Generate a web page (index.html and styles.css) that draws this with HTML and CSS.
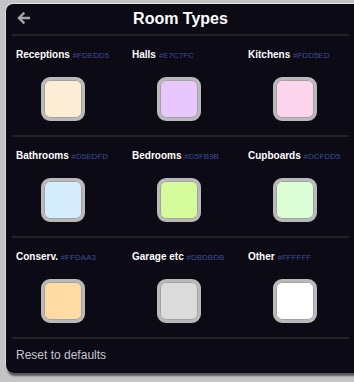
FILE: index.html
```html
<!DOCTYPE html>
<html>
<head>
    <title>Room Types</title>
    <link rel="stylesheet" href="styles.css">
</head>
<body>
    <div class="panel">
        <div class="header">
            <span class="back">
                <svg width="13" height="12" viewBox="0 0 13 12">
                    <path d="M12 6H2.5M6.5 1.5L2 6l4.5 4.5" fill="none" stroke="#a6a6a6" stroke-width="2.4" stroke-linecap="square"/>
                </svg>
            </span>
            <h1 class="title">Room Types</h1>
            <span></span>
        </div>

        <div class="row">
            <div class="room">
                <div class="label">Receptions <span class="hex">#FDEDD5</span></div>
                <div class="swatch c-receptions"></div>
            </div>
            <div class="room">
                <div class="label">Halls <span class="hex">#E7C7FC</span></div>
                <div class="swatch c-halls"></div>
            </div>
            <div class="room">
                <div class="label">Kitchens <span class="hex">#FDD5ED</span></div>
                <div class="swatch c-kitchens"></div>
            </div>
        </div>

        <div class="row">
            <div class="room">
                <div class="label">Bathrooms <span class="hex">#D5EDFD</span></div>
                <div class="swatch c-bathrooms"></div>
            </div>
            <div class="room">
                <div class="label">Bedrooms <span class="hex">#D5FB9B</span></div>
                <div class="swatch c-bedrooms"></div>
            </div>
            <div class="room">
                <div class="label">Cupboards <span class="hex">#DCFDD5</span></div>
                <div class="swatch c-cupboards"></div>
            </div>
        </div>

        <div class="row">
            <div class="room">
                <div class="label">Conserv. <span class="hex">#FFDAA3</span></div>
                <div class="swatch c-conserv"></div>
            </div>
            <div class="room">
                <div class="label">Garage etc <span class="hex">#DBDBDB</span></div>
                <div class="swatch c-garage"></div>
            </div>
            <div class="room">
                <div class="label">Other <span class="hex">#FFFFFF</span></div>
                <div class="swatch c-other"></div>
            </div>
        </div>

        <div class="footer">Reset to defaults</div>
    </div>
</body>
</html>
```

FILE: styles.css
```css
html, body {
    margin: 0;
    height: 100%;
    overflow: hidden;
}

body {
    background: #c4c4c4;
    font-family: "Liberation Sans", Arial, sans-serif;
    padding: 3px 0 0 5px;
    box-sizing: border-box;
}

.panel {
    width: 350px;
    height: 370px;
    box-sizing: border-box;
    background: #0b0a15;
    border-top: 1px solid #e4e4e4;
    border-left: 1px solid #d6d6d6;
    border-radius: 8px 0 0 8px;
    box-shadow: 2px 3px 2px rgba(0,0,0,0.55);
}

.header {
    display: grid;
    grid-template-columns: 1fr auto 1fr;
    align-items: center;
    height: 30px;
    margin: 0 6px;
    border-bottom: 2px solid #222128;
}

.back {
    display: flex;
    padding-left: 5px;
    margin-top: -2px;
}

.title {
    margin: 0;
    font-size: 16px;
    font-weight: bold;
    color: #fff;
    line-height: 30px;
}

.row {
    display: grid;
    grid-template-columns: 116px 116px 116px;
    margin: 0 6px;
    padding: 13px 0 14px 4px;
    border-bottom: 2px solid #222128;
}

.label {
    font-size: 10px;
    font-weight: bold;
    color: #fff;
    line-height: 12px;
    white-space: nowrap;
}

.hex {
    font-size: 8px;
    font-weight: normal;
    color: #3e4c9a;
}

.swatch {
    width: 44px;
    height: 44px;
    box-sizing: border-box;
    margin: 15px 0 0 25px;
    border: 3px solid #b9b9b9;
    border-radius: 9px;
    box-shadow: inset 0 0 0 1px #a2a2a2;
}

.c-receptions { background: #FDEDD5; }
.c-halls { background: #E7C7FC; }
.c-kitchens { background: #FDD5ED; }
.c-bathrooms { background: #D5EDFD; }
.c-bedrooms { background: #D5FB9B; }
.c-cupboards { background: #DCFDD5; }
.c-conserv { background: #FFDAA3; }
.c-garage { background: #DBDBDB; }
.c-other { background: #FFFFFF; }

.footer {
    padding-left: 10px;
    line-height: 32px;
    font-size: 12px;
    color: #c6c6d2;
}
```
